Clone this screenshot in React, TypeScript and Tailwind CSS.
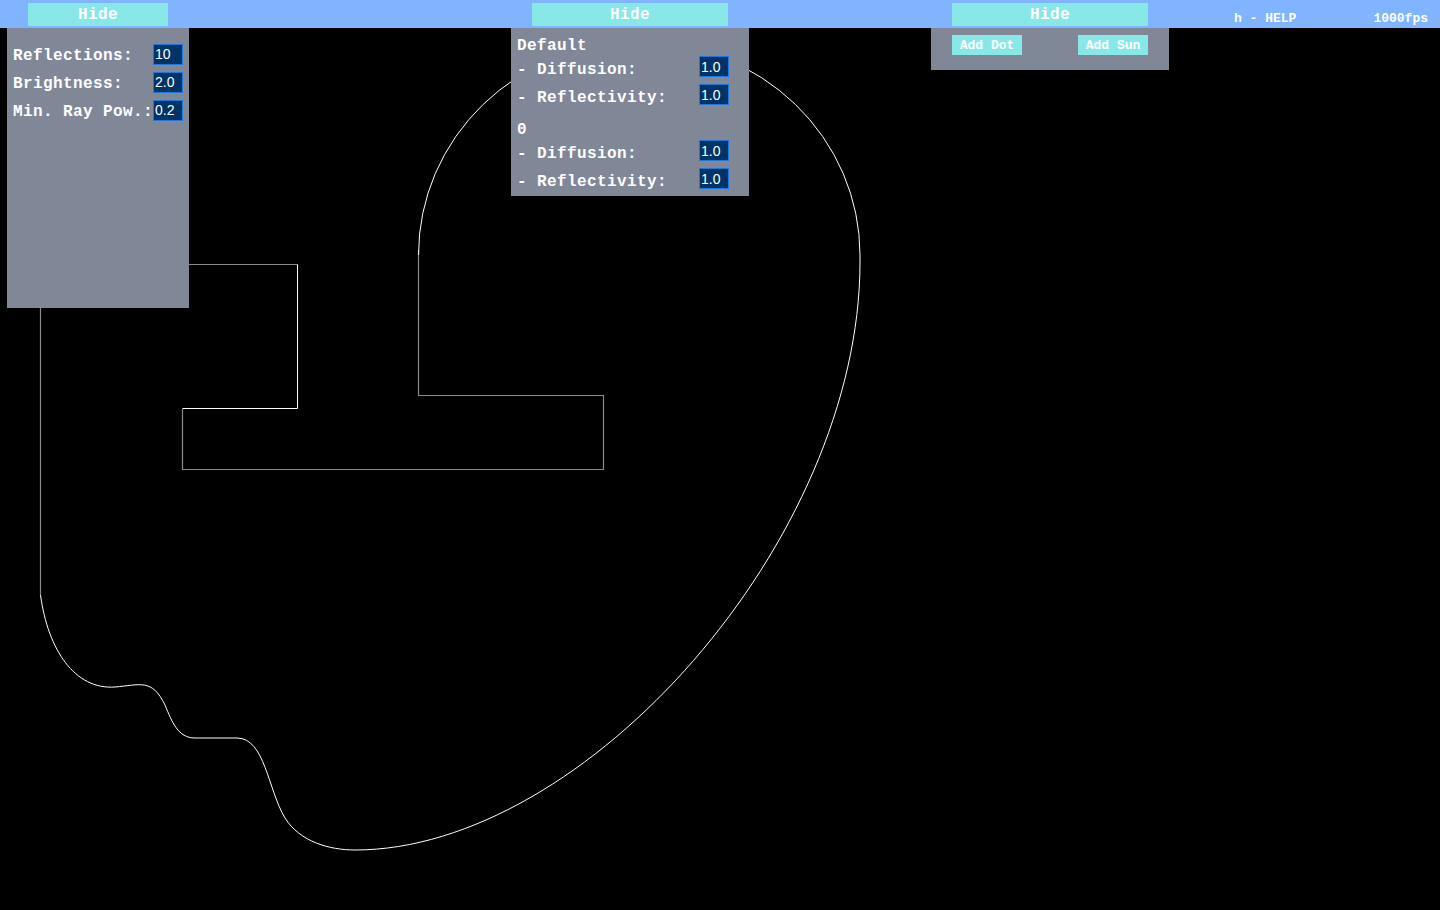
import React from "react";

const mono = "font-['Liberation_Mono',monospace] font-bold text-white";

function Field({ value }: { value: string }) {
  return (
    <input
      defaultValue={value}
      className="w-[30px] h-[21px] border border-[#1e78dc] bg-[#003366] text-white px-[1px] py-0 text-[14px] leading-none font-['Liberation_Sans',Arial,sans-serif] font-normal outline-none"
    />
  );
}

function HideButton() {
  return (
    <div className={`mx-[21px] mt-[3px] h-[23px] bg-[#88e8e8] text-center text-[16px] leading-[25px] tracking-[0.4px] ${mono}`}>
      Hide
    </div>
  );
}

function Row({ label, value, w, first }: { label: string; value: string; w: string; first?: boolean }) {
  return (
    <div className="flex h-[28px] items-start">
      <div className={`${w} shrink-0 whitespace-pre text-[16px] leading-[28px] tracking-[0.4px]`}>{label}</div>
      <div className={first ? "mt-[1px]" : ""}>
        <Field value={value} />
      </div>
    </div>
  );
}

function MatRow({ label, value }: { label: string; value: string }) {
  return (
    <div className="flex h-[28px] items-start">
      <div className="w-[182px] shrink-0 whitespace-pre text-[16px] leading-[28px] tracking-[0.4px]">{label}</div>
      <Field value={value} />
    </div>
  );
}

export default function App() {
  return (
    <div className={`relative w-[1440px] h-[910px] bg-black overflow-hidden ${mono}`}>
      <svg className="absolute inset-0" width={1440} height={910} viewBox="0 0 1440 910" fill="none">
        <path d="M40.5 264.5 H297.5" stroke="#8a8a8a" strokeWidth={1.2} />
        <path d="M297.5 264.5 V408.5 H182.5" stroke="#ffffff" strokeWidth={1} />
        <path d="M182.5 408.5 V469.5 H603.5 V395.5 H418.5 V250" stroke="#8a8a8a" strokeWidth={1.2} />
        <path d="M40.5 264.5 V595" stroke="#8a8a8a" strokeWidth={1.2} />
        <path d="M418.5 255 A220.75 213 0 0 1 639.25 42 A220.75 213 0 0 1 860 255" stroke="#ffffff" strokeWidth={1} />
        <path d="M860 255 V262 C860 540 585 850 355 850" stroke="#ffffff" strokeWidth={1} />
        <path
          d="M40.5 595 C48 650 75 690 115 687 C140 685 152 678 165 705 C172 722 178 738 195 738 H237 C265 738 268 790 285 818 C300 842 330 850 355 850"
          stroke="#ffffff"
          strokeWidth={1}
        />
      </svg>

      <div className="relative h-[28px] bg-[#80b4ff] flex justify-end gap-[77px] pr-[12px] pt-[11px] text-[13px] leading-[15px]">
        <span>h - HELP</span>
        <span>1000fps</span>
      </div>

      {/* Left window */}
      <div className="absolute top-0 left-[7px] w-[182px]">
        <HideButton />
        <div className="mt-[2px] h-[280px] bg-[#808898] pl-[6px] pt-[14px]">
          <Row label="Reflections:" value="10" w="w-[140px]" first />
          <Row label="Brightness:" value="2.0" w="w-[140px]" first />
          <Row label="Min. Ray Pow.:" value="0.2" w="w-[140px]" first />
        </div>
      </div>

      {/* Middle window */}
      <div className="absolute top-0 left-[511px] w-[238px]">
        <HideButton />
        <div className="mt-[2px] h-[168px] bg-[#808898] pl-[6px] pt-[4px] flex flex-col">
          <div className="h-[24px] shrink-0 text-[16px] leading-[28px] tracking-[0.4px]">Default</div>
          <MatRow label="- Diffusion:" value="1.0" />
          <MatRow label="- Reflectivity:" value="1.0" />
          <div className="mt-[4px] h-[24px] shrink-0 text-[16px] leading-[28px] tracking-[0.4px]">0</div>
          <MatRow label="- Diffusion:" value="1.0" />
          <MatRow label="- Reflectivity:" value="1.0" />
        </div>
      </div>

      {/* Right window */}
      <div className="absolute top-0 left-[931px] w-[238px]">
        <HideButton />
        <div className="mt-[2px] h-[42px] bg-[#808898] px-[21px] pt-[7px] flex justify-between items-start">
          <div className="w-[70px] h-[20px] bg-[#88e8e8] text-center text-[13px] leading-[21px]">Add Dot</div>
          <div className="w-[70px] h-[20px] bg-[#88e8e8] text-center text-[13px] leading-[21px]">Add Sun</div>
        </div>
      </div>
    </div>
  );
}
